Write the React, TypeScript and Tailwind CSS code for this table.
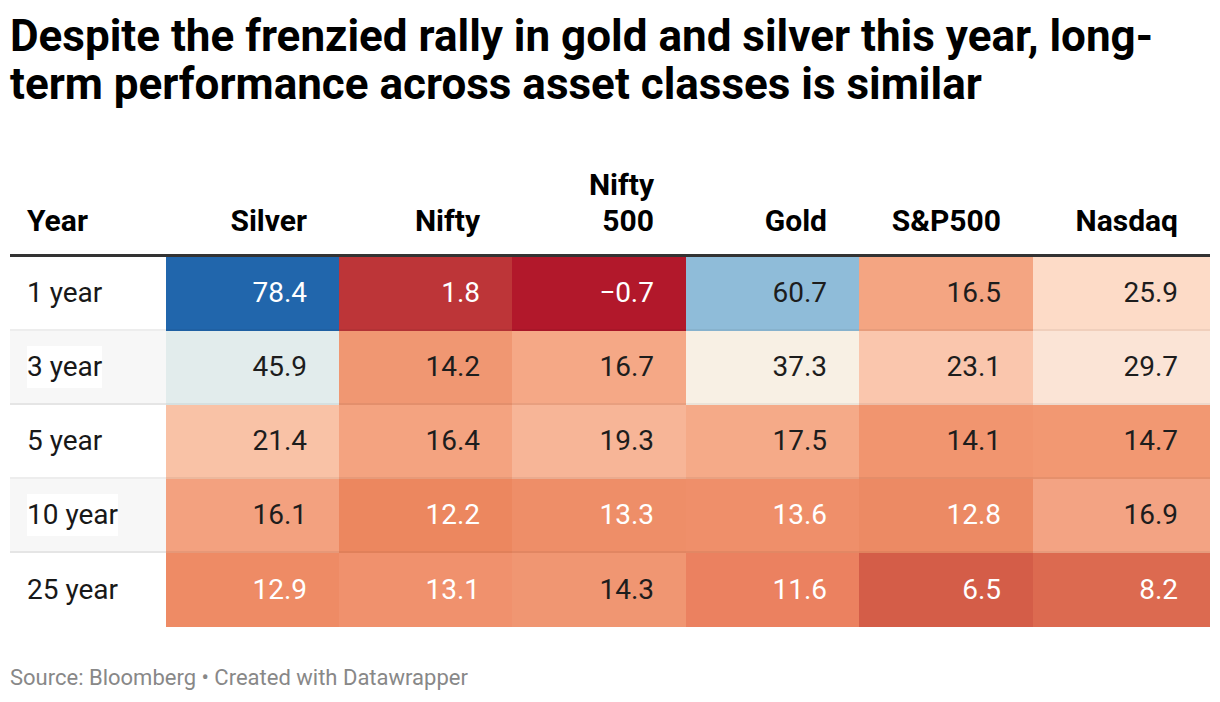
const columns = ["Silver", "Nifty", "Nifty 500", "Gold", "S&P500", "Nasdaq"];

type Cell = { v: string; bg: string; light?: boolean };

const rows: { label: string; striped: boolean; cells: Cell[] }[] = [
  {
    label: "1 year",
    striped: false,
    cells: [
      { v: "78.4", bg: "bg-[#2166ac]", light: true },
      { v: "1.8", bg: "bg-[#bd3538]", light: true },
      { v: "\u22120.7", bg: "bg-[#b2182b]", light: true },
      { v: "60.7", bg: "bg-[#8fbcd9]" },
      { v: "16.5", bg: "bg-[#f4a582]" },
      { v: "25.9", bg: "bg-[#fddbc7]" },
    ],
  },
  {
    label: "3 year",
    striped: true,
    cells: [
      { v: "45.9", bg: "bg-[#e2ecec]" },
      { v: "14.2", bg: "bg-[#f09772]" },
      { v: "16.7", bg: "bg-[#f5a886]" },
      { v: "37.3", bg: "bg-[#f8f0e4]" },
      { v: "23.1", bg: "bg-[#fac6ad]" },
      { v: "29.7", bg: "bg-[#fbe4d6]" },
    ],
  },
  {
    label: "5 year",
    striped: false,
    cells: [
      { v: "21.4", bg: "bg-[#f9c2a6]" },
      { v: "16.4", bg: "bg-[#f4a380]" },
      { v: "19.3", bg: "bg-[#f7b597]" },
      { v: "17.5", bg: "bg-[#f5aa88]" },
      { v: "14.1", bg: "bg-[#f1956f]" },
      { v: "14.7", bg: "bg-[#f29872]" },
    ],
  },
  {
    label: "10 year",
    striped: true,
    cells: [
      { v: "16.1", bg: "bg-[#f3a17f]" },
      { v: "12.2", bg: "bg-[#ec875f]", light: true },
      { v: "13.3", bg: "bg-[#ee8e68]", light: true },
      { v: "13.6", bg: "bg-[#ef8f6a]", light: true },
      { v: "12.8", bg: "bg-[#ec8a64]", light: true },
      { v: "16.9", bg: "bg-[#f3a383]" },
    ],
  },
  {
    label: "25 year",
    striped: false,
    cells: [
      { v: "12.9", bg: "bg-[#ee8b65]", light: true },
      { v: "13.1", bg: "bg-[#f0916d]", light: true },
      { v: "14.3", bg: "bg-[#f09672]" },
      { v: "11.6", bg: "bg-[#eb8160]", light: true },
      { v: "6.5", bg: "bg-[#d45d48]", light: true },
      { v: "8.2", bg: "bg-[#dc6a50]", light: true },
    ],
  },
];

export default function App() {
  return (
    <div className="min-h-[702px] w-[1220px] bg-white px-[10px] pt-[12px] font-['Roboto',sans-serif] text-[#181818]">
      <h1 className="text-[44px] font-bold leading-[48px] text-black">
        Despite the frenzied rally in gold and silver this year, long-term
        performance across asset classes is similar
      </h1>

      <div className="mt-[59px] grid grid-cols-[156px_173px_173px_174px_173px_174px_177px]">
        <div className="flex items-end border-b-[3px] border-[#333] pb-[15px] pl-[17px] text-[30px] font-bold leading-[36px] text-black">
          Year
        </div>
        {columns.map((c) => (
          <div
            key={c}
            className="flex items-end justify-end border-b-[3px] border-[#333] pb-[15px] pr-[32px] text-right text-[30px] font-bold leading-[36px] text-black"
          >
            {c === "Nifty 500" ? (
              <span>
                Nifty
                <br />
                500
              </span>
            ) : (
              c
            )}
          </div>
        ))}

        {rows.map((r, ri) => {
          const last = ri === rows.length - 1;
          return (
            <div key={r.label} className="contents">
              <div
                className={`flex h-[74px] items-center pl-[17px] text-[28px] ${
                  r.striped ? "bg-[#f7f7f7]" : "bg-white"
                } ${last ? "" : "border-b-2 border-black/[0.07]"}`}
              >
                <span className="bg-white">{r.label}</span>
              </div>
              {r.cells.map((cell, ci) => (
                <div
                  key={ci}
                  className={`flex h-[74px] items-center justify-end pr-[32px] text-[28px] ${cell.bg} ${
                    cell.light ? "text-white" : "text-[#1d1d1d]"
                  } ${last ? "" : "border-b-2 border-black/[0.05]"}`}
                >
                  {cell.v}
                </div>
              ))}
            </div>
          );
        })}
      </div>

      <p className="mt-[38px] text-[22px] leading-[26px] text-[#888]">
        Source: Bloomberg • Created with Datawrapper
      </p>
    </div>
  );
}
